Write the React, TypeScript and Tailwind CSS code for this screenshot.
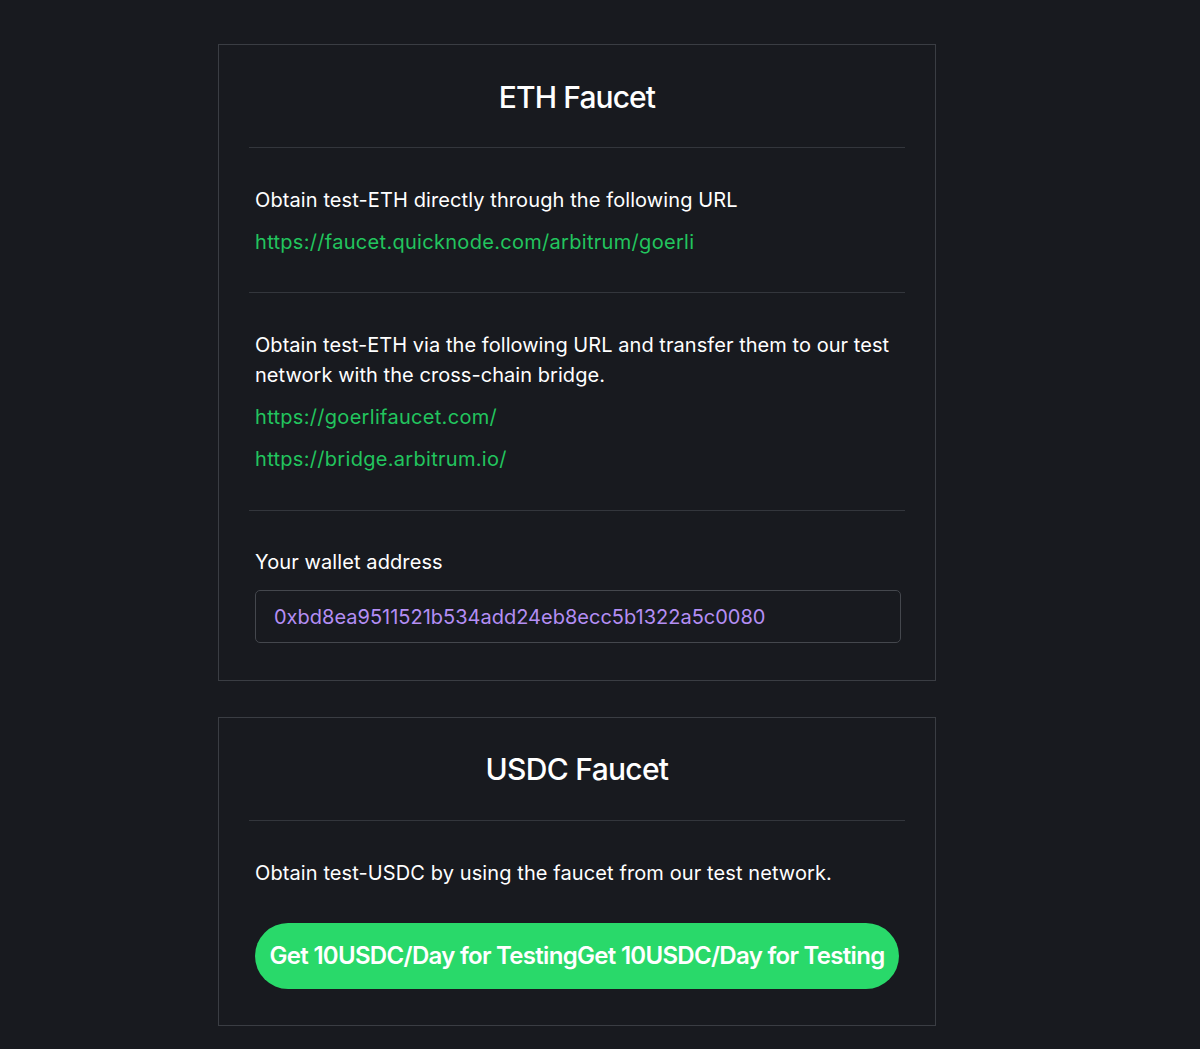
import React from "react";

const Divider = () => <div className="h-px bg-[#33363c]" />;

export default function App() {
  return (
    <div
      className="min-h-[1049px] w-full bg-[#181a1f] text-white"
      style={{ fontFamily: "Inter, 'Noto Sans', sans-serif" }}
    >
      <div className="pt-[44px] pl-[218px]">
        <div className="w-[718px] border border-[#3a3d43] px-[30px] pt-[34px] pb-[37px]">
          <h2 className="text-center text-[30px] leading-[36px] font-medium tracking-[-0.9px] mb-[32px]">ETH Faucet</h2>
          <Divider />
          <div className="px-[6px] pt-[37px] pb-[35px] text-[20px] leading-[30px] tracking-[0.1px]">
            <p>Obtain test-ETH directly through the following URL</p>
            <a className="block mt-[12px] text-[#22c55e] tracking-[0.3px]">https://faucet.quicknode.com/arbitrum/goerli</a>
          </div>
          <Divider />
          <div className="px-[6px] pt-[37px] pb-[36px] text-[20px] leading-[30px] tracking-[0.05px]">
            <p>Obtain test-ETH via the following URL and transfer them to our test network with the cross-chain bridge.</p>
            <a className="block mt-[12px] text-[#22c55e] tracking-[0.3px]">https://goerlifaucet.com/</a>
            <a className="block mt-[12px] text-[#22c55e] tracking-[0.3px]">https://bridge.arbitrum.io/</a>
          </div>
          <Divider />
          <div className="pl-[6px] pr-[4px] pt-[36px] text-[20px] leading-[30px] tracking-[0.1px]">
            <p>Your wallet address</p>
            <div className="mt-[13px] h-[53px] rounded-[5px] border border-[#44474d] flex items-center px-[18px] text-[#b48ef4] tracking-[0px]">
              0xbd8ea9511521b534add24eb8ecc5b1322a5c0080
            </div>
          </div>
        </div>

        <div className="mt-[36px] w-[718px] border border-[#3a3d43] px-[30px] pt-[33px] pb-[36px]">
          <h2 className="text-center text-[30px] leading-[36px] font-medium tracking-[-0.7px] mb-[33px]">USDC Faucet</h2>
          <Divider />
          <div className="pl-[6px] pr-[6px] pt-[37px] text-[20px] leading-[30px] tracking-[0.1px]">
            <p>Obtain test-USDC by using the faucet from our test network.</p>
            <button className="mt-[35px] h-[66px] w-[644px] rounded-full bg-[#29d96a] text-white text-[24px] font-semibold tracking-[-0.7px] flex items-center justify-center whitespace-nowrap">
              Get 10USDC/Day for TestingGet 10USDC/Day for Testing
            </button>
          </div>
        </div>
      </div>
    </div>
  );
}
